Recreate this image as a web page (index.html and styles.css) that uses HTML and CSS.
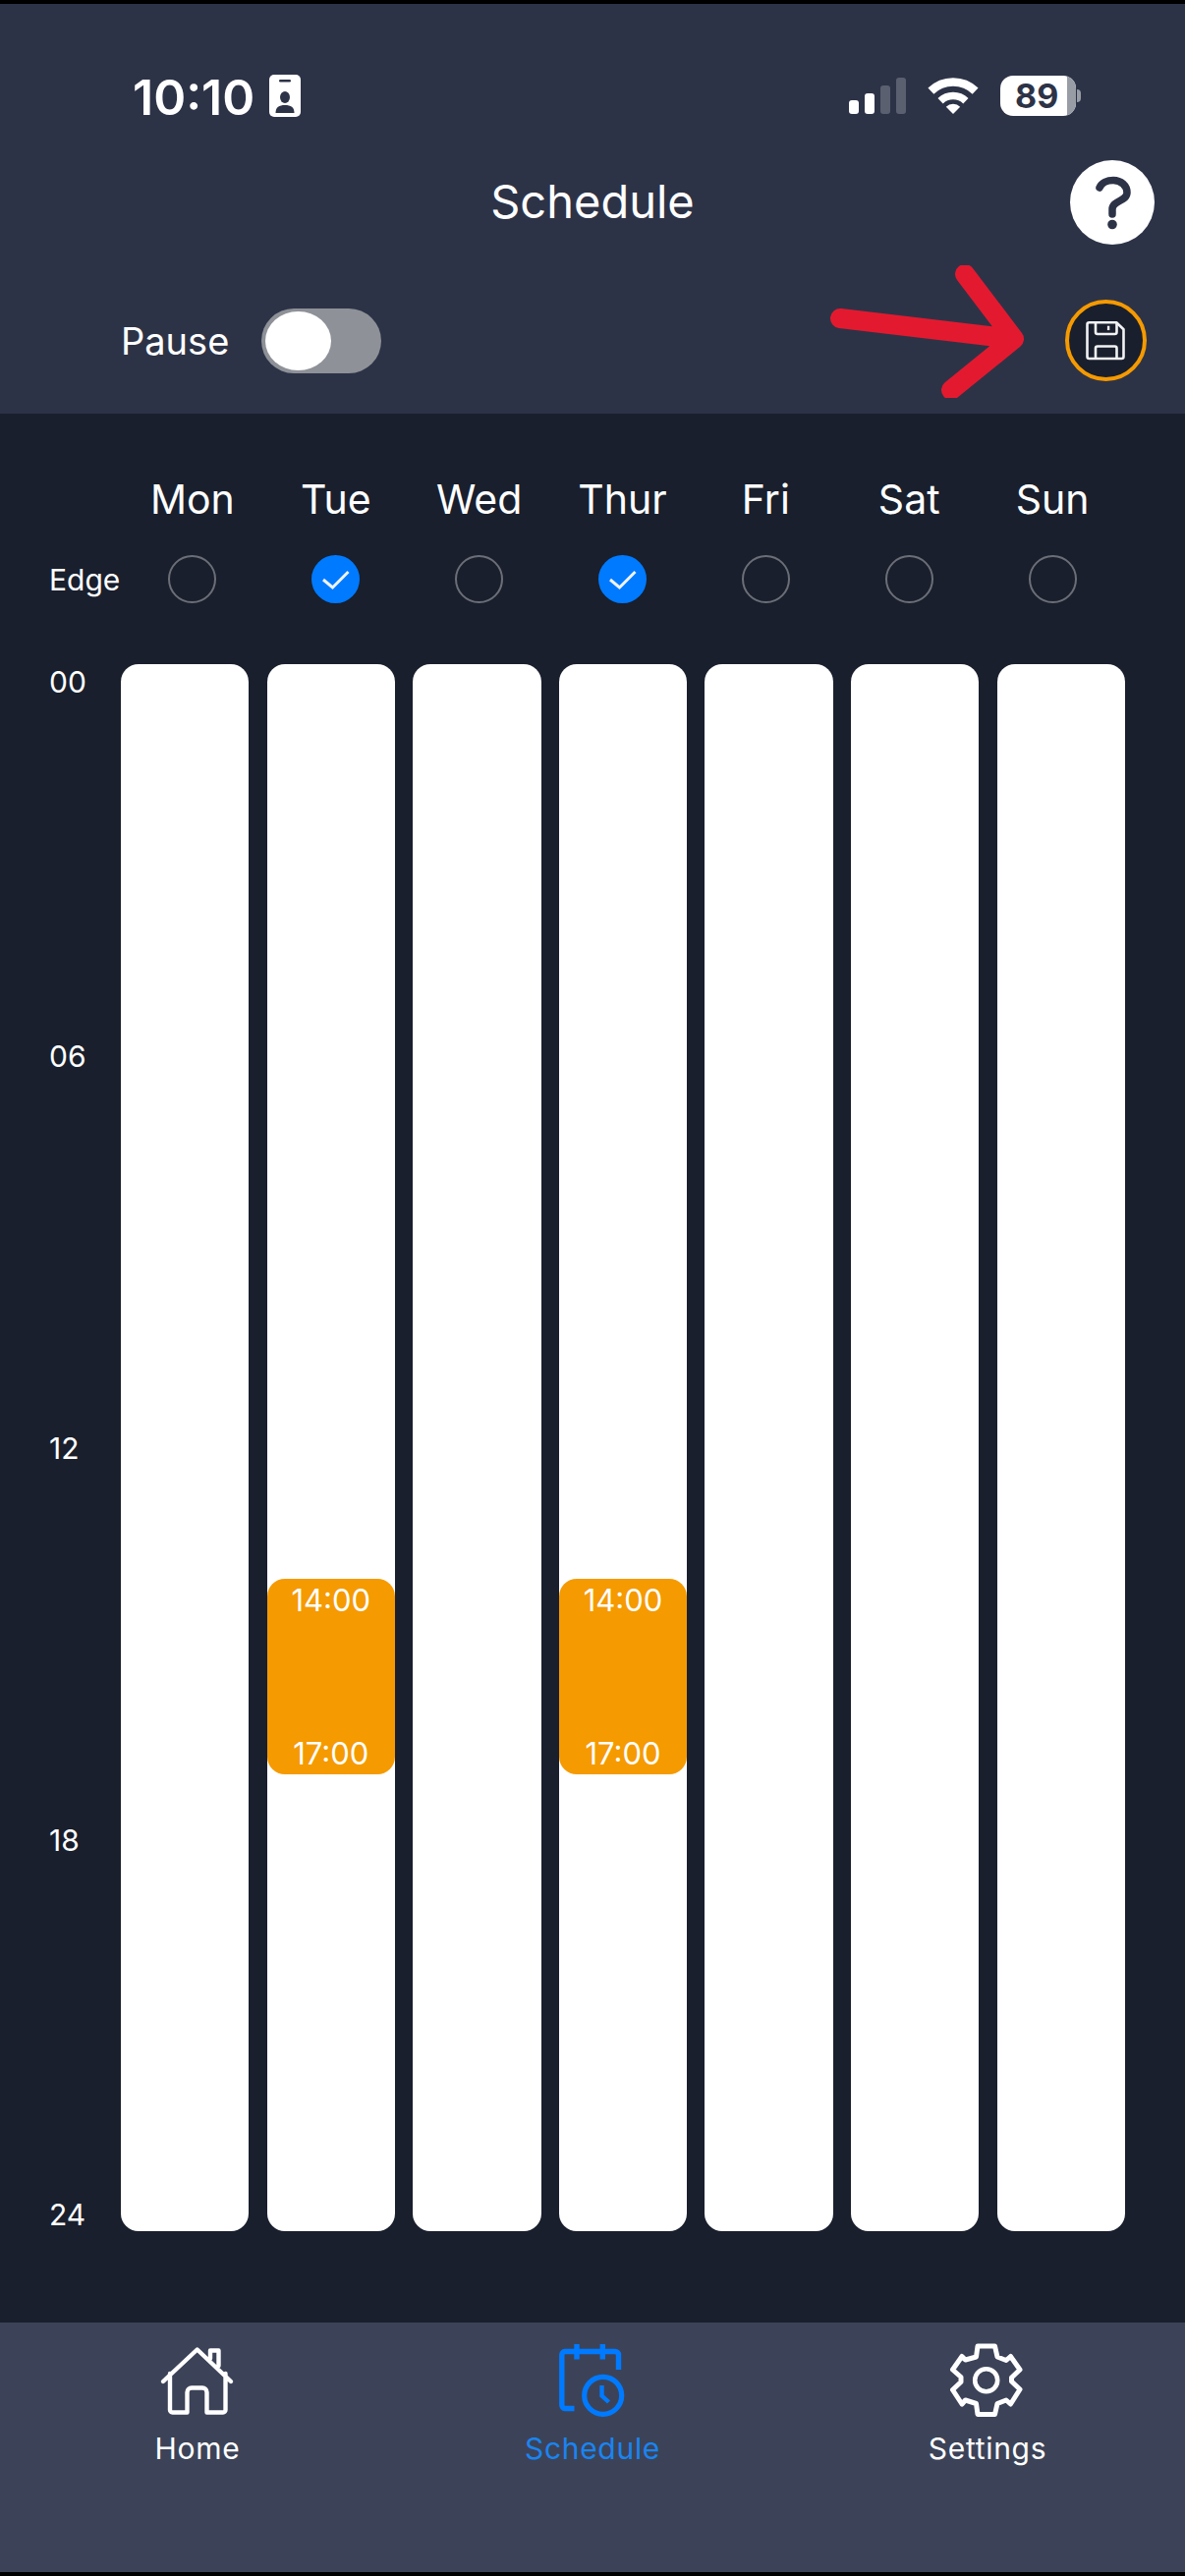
FILE: index.html
```html
<!DOCTYPE html>
<html lang="en">
<head>
    <meta charset="UTF-8">
    <meta name="viewport" content="width=device-width, initial-scale=1.0">
    <title>Schedule</title>
    <link rel="stylesheet" href="styles.css">
</head>
<body>
<div class="screen">
    <!-- header -->
    <header class="header">
        <div class="status">
            <div class="status-left">
                <span class="time">10:10</span>
                <svg class="badge" viewBox="0 0 32 43">
                    <rect width="32" height="43" rx="5" fill="#fff"/>
                    <rect x="10" y="5" width="12" height="2.6" rx="1.3" fill="#2d3347"/>
                    <ellipse cx="16" cy="23" rx="5" ry="6" fill="#2d3347"/>
                    <path d="M6.5 39C6.5 33 10 31 16 31S25.5 33 25.5 39Z" fill="#2d3347"/>
                </svg>
            </div>
            <div class="status-right">
                <div class="signal">
                    <span class="bar bar1"></span>
                    <span class="bar bar2"></span>
                    <span class="bar bar3"></span>
                    <span class="bar bar4"></span>
                </div>
                <svg class="wifi" viewBox="0 0 52 38">
                    <path d="M3.4 13.6A32.5 32.5 0 0 1 48.6 13.6" fill="none" stroke="#fff" stroke-width="8.5"/>
                    <path d="M13.1 23.7A18.5 18.5 0 0 1 38.9 23.7" fill="none" stroke="#fff" stroke-width="7.5"/>
                    <path d="M26 37L18.8 29.8A10.2 10.2 0 0 1 33.2 29.8Z" fill="#fff"/>
                </svg>
                <div class="battery">
                    <div class="battery-body">
                        <span class="battery-level">89</span>
                        <span class="battery-rest"></span>
                    </div>
                    <span class="battery-nub"></span>
                </div>
            </div>
        </div>
        <div class="title-row">
            <h1 class="title">Schedule</h1>
            <svg class="help" viewBox="0 0 86 86">
                <circle cx="43" cy="43" r="43" fill="#fff"/>
                <path d="M30 28C32 23 38 20.5 44 20.5C52 20.5 58 26 58 33C58 42 43 41 43 50V55" fill="none" stroke="#2d3347" stroke-width="7.5" stroke-linecap="round"/>
                <circle cx="43" cy="65.5" r="4.8" fill="#2d3347"/>
            </svg>
        </div>
        <div class="action-row">
            <div class="pause">
                <span class="pause-label">Pause</span>
                <div class="toggle"><div class="knob"></div></div>
            </div>
            <div class="save">
                <svg class="save-icon" viewBox="20.5 20.5 42 42">
                    <path d="M24 22.8H51.7L59 29.8V57.5A2 2 0 0 1 57 59.5H24A2 2 0 0 1 22 57.5V24.8A2 2 0 0 1 24 22.8Z" fill="none" stroke="#f1f2f4" stroke-width="2.6" stroke-linejoin="round"/>
                    <path d="M30.5 23V32.5A2 2 0 0 0 32.5 34.5H50A2 2 0 0 0 52 32.5V23" fill="none" stroke="#f1f2f4" stroke-width="2.6"/>
                    <path d="M30.5 59.5V49A2 2 0 0 1 32.5 47H50A2 2 0 0 1 52 49V59.5" fill="none" stroke="#f1f2f4" stroke-width="2.6"/>
                    <rect x="42.4" y="26.2" width="2.4" height="4.4" fill="#f1f2f4"/>
                </svg>
            </div>
        </div>
        <svg class="arrow" viewBox="0 0 210 135">
            <path d="M15 54L192 75M142 9L192 75L128 127" fill="none" stroke="#e31a2f" stroke-width="20" stroke-linecap="round" stroke-linejoin="round"/>
        </svg>
    </header>

    <!-- week -->
    <main class="main">
        <div class="days">
            <span></span>
            <span class="day">Mon</span>
            <span class="day">Tue</span>
            <span class="day">Wed</span>
            <span class="day">Thur</span>
            <span class="day">Fri</span>
            <span class="day">Sat</span>
            <span class="day">Sun</span>
            <span class="edge">Edge</span>
            <span class="radio"></span>
            <span class="radio checked"><svg viewBox="0 0 49 49"><path d="M12 25L21.5 33L37.5 17" fill="none" stroke="#eef3fb" stroke-width="3"/></svg></span>
            <span class="radio"></span>
            <span class="radio checked"><svg viewBox="0 0 49 49"><path d="M12 25L21.5 33L37.5 17" fill="none" stroke="#eef3fb" stroke-width="3"/></svg></span>
            <span class="radio"></span>
            <span class="radio"></span>
            <span class="radio"></span>
        </div>
        <div class="board">
            <div class="hours">
                <span class="hour">00</span>
                <span class="hour h06">06</span>
                <span class="hour h12">12</span>
                <span class="hour h18">18</span>
                <span class="hour h24">24</span>
            </div>
            <div class="columns">
                <div class="column"></div>
                <div class="column">
                    <div class="slot"><span>14:00</span><span>17:00</span></div>
                </div>
                <div class="column"></div>
                <div class="column">
                    <div class="slot"><span>14:00</span><span>17:00</span></div>
                </div>
                <div class="column"></div>
                <div class="column"></div>
                <div class="column"></div>
            </div>
        </div>
    </main>

    <!-- tabs -->
    <nav class="tabs">
        <div class="tab">
            <svg class="tab-icon" viewBox="1 0 100 95">
                <path d="M16 49L50.7 16.5L85 49M23 41V78A2.5 2.5 0 0 0 25.5 80.5H40.5V60A4.5 4.5 0 0 1 45 55.5H56A4.5 4.5 0 0 1 60.5 60V80.5H77A2.5 2.5 0 0 0 79.5 78V41M64 25.5V17.5H72.5V33" fill="none" stroke="#fff" stroke-width="4.4" stroke-linecap="round" stroke-linejoin="round"/>
            </svg>
            <span class="tab-label">Home</span>
        </div>
        <div class="tab active">
            <svg class="tab-icon" viewBox="-2 0 100 95">
                <path d="M74.5 37V22A3.5 3.5 0 0 0 71 18.5H20A3.5 3.5 0 0 0 16.8 22V73A3.5 3.5 0 0 0 20 76.5H29.5M32 11V26.5M58.3 11V26.5" fill="none" stroke="#007aff" stroke-width="5.4"/>
                <circle cx="58.7" cy="63.3" r="19" fill="none" stroke="#007aff" stroke-width="5.2"/>
                <path d="M57.5 53V63.5L64.5 70" fill="none" stroke="#007aff" stroke-width="4.4"/>
            </svg>
            <span class="tab-label">Schedule</span>
        </div>
        <div class="tab">
            <svg class="tab-icon" viewBox="0 0 100 95">
                <path d="M40 13H57.5L60 24L69 27.5L73.5 23.5L83 37L74.5 45V49L83 57L73.5 72L69 68L60 71.5L57.5 82.5H40L38.5 71.5L27.5 68L24 72L14.5 57.5L23 49.5V44.5L14.5 37L24 23.5L27.5 27L38.5 24Z" fill="none" stroke="#fff" stroke-width="5" stroke-linejoin="round"/>
                <circle cx="48.7" cy="47.7" r="11.5" fill="none" stroke="#fff" stroke-width="4.6"/>
            </svg>
            <span class="tab-label">Settings</span>
        </div>
    </nav>
</div>
</body>
</html>
```

FILE: styles.css
```css
/* page */
body{
    margin: 0;
    background: #000;
    font-family: Inter, "Noto Sans", sans-serif;
    color: #fff;
}
.screen{
    box-sizing: border-box;
    width: 1206px;
    height: 2622px;
    padding: 4px 0;
    display: flex;
    flex-direction: column;
}

/* header */
.header{
    position: relative;
    background: #2d3347;
    padding: 72px 0 33px;
}
.status{
    height: 43px;
    padding: 0 106px 0 135px;
    display: flex;
    justify-content: space-between;
    align-items: center;
}
.status-left{
    display: flex;
    align-items: center;
    gap: 15px;
}
.time{
    padding-top: 3px;
    font-size: 50px;
    font-weight: 600;
    line-height: 45px;
}
.badge{
    width: 32px;
    height: 43px;
}
.status-right{
    display: flex;
    align-items: center;
    gap: 22px;
}
.signal{
    display: flex;
    align-items: flex-end;
    gap: 6px;
    height: 37px;
}
.bar{
    width: 10px;
    border-radius: 3px;
    background: #fff;
}
.bar1{ height: 14px; }
.bar2{ height: 21px; }
.bar3{ height: 29px; background: #5a6070; }
.bar4{ height: 37px; background: #5a6070; }
.wifi{
    width: 52px;
    height: 38px;
}
.battery{
    display: flex;
    align-items: center;
    gap: 1px;
}
.battery-body{
    width: 77px;
    height: 41px;
    border-radius: 13px;
    overflow: hidden;
    background: #fff;
    display: flex;
    justify-content: space-between;
}
.battery-level{
    padding-left: 15px;
    font-size: 34px;
    font-weight: 700;
    line-height: 41px;
    color: #2d3347;
}
.battery-rest{
    width: 9px;
    background: #989ca5;
}
.battery-nub{
    width: 4px;
    height: 13px;
    border-radius: 0 4px 4px 0;
    background: #989ca5;
}
.title-row{
    margin-top: 44px;
    padding: 0 31px;
    display: grid;
    grid-template-columns: 1fr auto 1fr;
    align-items: center;
}
.title{
    grid-column: 2;
    margin: 0;
    padding-bottom: 3px;
    font-size: 47px;
    font-weight: 400;
}
.help{
    grid-column: 3;
    justify-self: end;
    width: 86px;
    height: 86px;
}
.action-row{
    margin-top: 56px;
    padding: 0 39px 0 123px;
    display: flex;
    justify-content: space-between;
    align-items: center;
}
.pause{
    display: flex;
    align-items: center;
    gap: 33px;
}
.pause-label{
    font-size: 38px;
    font-weight: 400;
}
.toggle{
    box-sizing: border-box;
    width: 122px;
    height: 66px;
    padding: 3px 4px;
    border-radius: 33px;
    background: #8e9197;
}
.knob{
    width: 67px;
    height: 60px;
    border-radius: 50%;
    background: #fff;
}
.save{
    box-sizing: border-box;
    width: 83px;
    height: 83px;
    border: 4px solid #f59a00;
    border-radius: 50%;
    background: #191f2d;
    display: flex;
    justify-content: center;
    align-items: center;
}
.save-icon{
    width: 42px;
    height: 42px;
}
.arrow{
    position: absolute;
    left: 840px;
    top: 266px;
    width: 210px;
    height: 135px;
}

/* week */
.main{
    flex: 1;
    background: #191f2d;
    padding: 63px 61px 0 50px;
}
.days{
    display: grid;
    grid-template-columns: 73px repeat(7, 1fr);
    row-gap: 33px;
    align-items: center;
    justify-items: center;
    width: 1094px;
}
.day{
    font-size: 41px;
    line-height: 48px;
}
.edge{
    justify-self: start;
    font-size: 30px;
}
.radio{
    box-sizing: border-box;
    width: 49px;
    height: 49px;
    border: 2px solid #6b6e77;
    border-radius: 50%;
}
.radio.checked{
    border: 0;
    background: #007aff;
}
.radio svg{
    display: block;
    width: 49px;
    height: 49px;
}
.board{
    margin-top: 62px;
    display: flex;
}
.hours{
    width: 73px;
    display: flex;
    flex-direction: column;
}
.hour{
    font-size: 30px;
    line-height: 36px;
}
.h06{ margin-top: 345px; }
.h12{ margin-top: 363px; }
.h18{ margin-top: 363px; }
.h24{ margin-top: 345px; }
.columns{
    width: 1022px;
    height: 1595px;
    display: grid;
    grid-template-columns: repeat(7, 1fr);
    column-gap: 18.33px;
}
.column{
    position: relative;
    background: #fff;
    border-radius: 18px;
}
.slot{
    position: absolute;
    left: 0;
    right: 0;
    top: 931px;
    box-sizing: border-box;
    height: 199px;
    padding: 4px 0 3px;
    border-radius: 18px;
    background: #f59a00;
    display: flex;
    flex-direction: column;
    justify-content: space-between;
    align-items: center;
    font-size: 31px;
    line-height: 36px;
}

/* tabs */
.tabs{
    height: 254px;
    box-sizing: border-box;
    padding-top: 11px;
    background: #3c4358;
    display: grid;
    grid-template-columns: repeat(3, 1fr);
    align-items: start;
}
.tab{
    display: flex;
    flex-direction: column;
    align-items: center;
    gap: 4px;
}
.tab-icon{
    width: 100px;
    height: 95px;
}
.tab-label{
    font-size: 30px;
    line-height: 36px;
    letter-spacing: 0.7px;
}
.active .tab-label{
    color: #1a84f0;
}
```
